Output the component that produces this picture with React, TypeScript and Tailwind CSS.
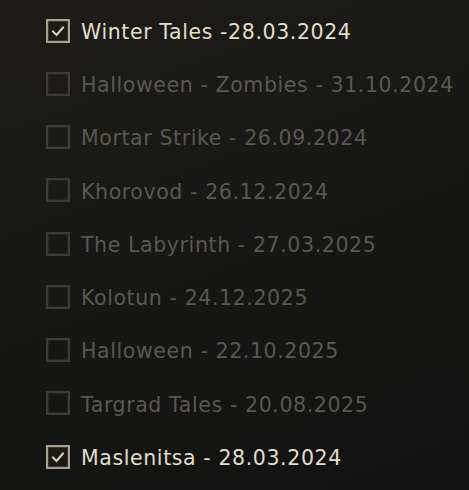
const events = [
  { title: "Winter Tales -28.03.2024", checked: true },
  { title: "Halloween - Zombies - 31.10.2024", checked: false },
  { title: "Mortar Strike - 26.09.2024", checked: false },
  { title: "Khorovod - 26.12.2024", checked: false },
  { title: "The Labyrinth - 27.03.2025", checked: false },
  { title: "Kolotun - 24.12.2025", checked: false },
  { title: "Halloween - 22.10.2025", checked: false },
  { title: "Targrad Tales - 20.08.2025", checked: false },
  { title: "Maslenitsa - 28.03.2024", checked: true },
];

const Checkbox = ({ checked }: { checked: boolean }) => {
  if (checked) {
    return (
      <div className="w-[24px] h-[24px] shrink-0 border-2 border-[#a8a28c] bg-[#1b1a16] flex items-center justify-center shadow-[inset_0_0_0_1px_#3a372e]">
        <svg width="16" height="16" viewBox="0 0 16 16" fill="none">
          <path
            d="M3 8.5 L6.5 12 L13 4.5"
            stroke="#d8d3bf"
            strokeWidth="2"
            strokeLinecap="square"
          />
        </svg>
      </div>
    );
  }
  return (
    <div className="w-[24px] h-[24px] shrink-0 border-2 border-[#3d3b34] shadow-[inset_0_0_0_1px_#24231f]" />
  );
};

export default function App() {
  return (
    <div
      className="w-[469px] h-[490px] overflow-hidden bg-[linear-gradient(160deg,#1d1c19_0%,#171715_45%,#121212_100%)] pt-[4px] pl-[46px]"
      style={{ fontFamily: '"DejaVu Sans", "Liberation Sans", sans-serif' }}
    >
      {events.map((ev) => (
        <div key={ev.title} className="h-[53.25px] flex items-center gap-[11px]">
          <Checkbox checked={ev.checked} />
          <span
            className={
              "pt-[3px] text-[20.5px] leading-none tracking-[0.6px] whitespace-nowrap " +
              (ev.checked ? "text-[#e2decb]" : "text-[#5a5850]")
            }
          >
            {ev.title}
          </span>
        </div>
      ))}
    </div>
  );
}
